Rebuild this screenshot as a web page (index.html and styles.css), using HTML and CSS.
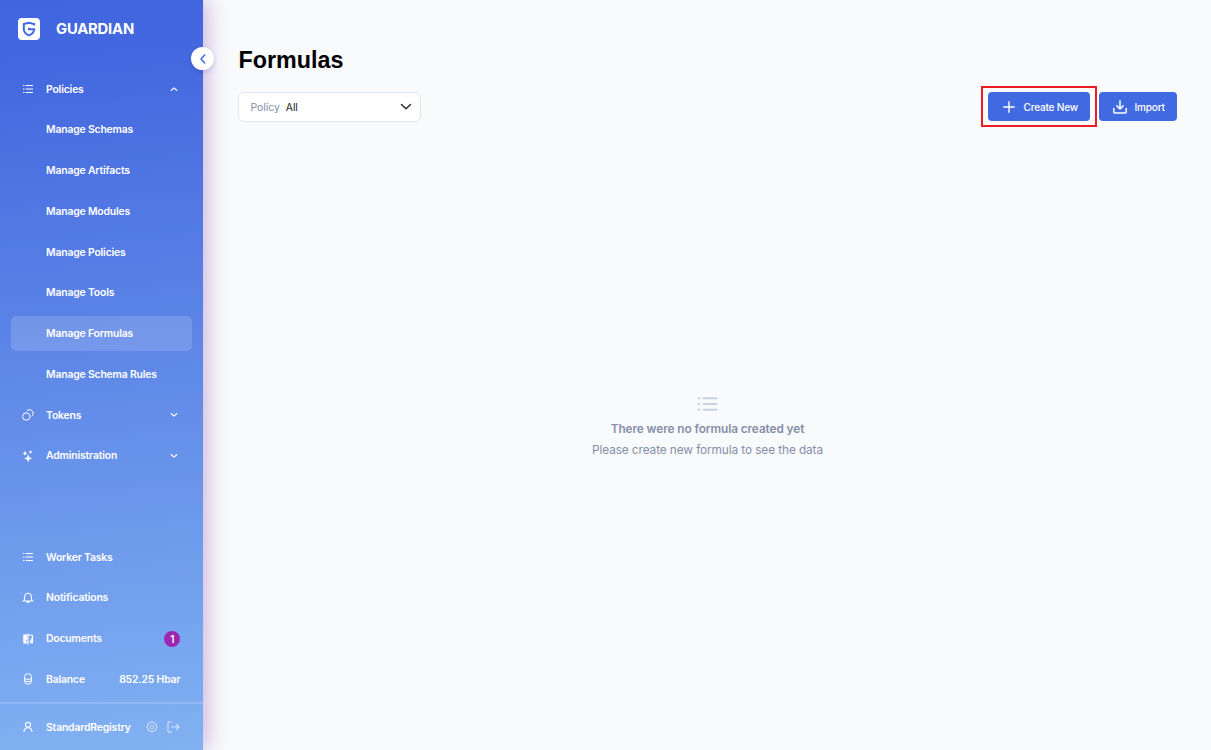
FILE: index.html
```html
<!DOCTYPE html>
<html lang="en">
<head>
<meta charset="utf-8">
<title>Guardian - Formulas</title>
<link rel="stylesheet" href="styles.css">
</head>
<body>
<svg class="defs" width="0" height="0" aria-hidden="true">
  <symbol id="list" viewBox="0 0 12 12"><path d="M1 2.500h1.500M1 6h1.500M1 9.500h1.500M3.800 2.500H11M3.800 6H11M3.800 9.500H11" fill="none" stroke="currentColor" stroke-width="1.100"/></symbol>
  <symbol id="down" viewBox="0 0 8 6"><path d="M1.200 1.500 4 4.200 6.800 1.500" fill="none" stroke="currentColor" stroke-width="1.100" stroke-linecap="round" stroke-linejoin="round"/></symbol>
</svg>
<div class="app">
  <aside class="sidebar">
    <header class="brand">
      <svg class="logo" viewBox="0 0 22 22"><rect width="22" height="22" rx="4" fill="#fff"/><path d="M16.200 7.600V6.100L11 4.700 5.800 6.100v5c0 3.300 2.300 5.200 5.200 6.300 2.800-1.100 5.100-3 5.200-6.100H11V9.700" fill="none" stroke="#4169e2" stroke-width="2"/></svg>
      <span class="brand-name">GUARDIAN</span>
    </header>
    <button class="collapse" aria-label="Collapse"><svg width="8" height="12" viewBox="0 0 8 12"><path d="M5.700 2 2 6l3.700 4" fill="none" stroke="#4169e2" stroke-width="1.500" stroke-linecap="round" stroke-linejoin="round"/></svg></button>
    <nav class="menu">
      <a class="item"><svg class="icon"><use href="#list"/></svg><span>Policies</span><svg class="chevron up"><use href="#down"/></svg></a>
      <a class="item sub">Manage Schemas</a>
      <a class="item sub">Manage Artifacts</a>
      <a class="item sub">Manage Modules</a>
      <a class="item sub">Manage Policies</a>
      <a class="item sub">Manage Tools</a>
      <a class="item sub active">Manage Formulas</a>
      <a class="item sub">Manage Schema Rules</a>
      <a class="item"><svg class="icon" viewBox="0 0 12 12"><g fill="none" stroke="currentColor"><circle cx="4.300" cy="7.500" r="3.700"/><path d="M4.600 2A3.700 3.700 0 1 1 9.700 7.300"/></g></svg><span>Tokens</span><svg class="chevron"><use href="#down"/></svg></a>
      <a class="item"><svg class="icon" viewBox="0 0 12 12"><path fill="currentColor" stroke="currentColor" stroke-width=".4" d="M6.200 4.700 7.200 7.400 9.700 8.400 7.200 9.300 6.200 11.700 5.200 9.300 2.700 8.400 5.200 7.400ZM3 1.200l.6 1.600 1.500.6-1.500.6L3 5.400l-.6-1.400L.9 3.400l1.500-.6ZM8.500.5l.5 1 1 .5-1 .4-.5 1-.5-1-1-.4 1-.5Z"/></svg><span>Administration</span><svg class="chevron"><use href="#down"/></svg></a>
    </nav>
    <nav class="menu bottom">
      <a class="item"><svg class="icon"><use href="#list"/></svg><span>Worker Tasks</span></a>
      <a class="item"><svg class="icon" viewBox="0 0 12 12"><path d="M1.500 9h9C9.300 8 9.400 7 9.400 5.200c0-2.400-1.300-4-3.400-4s-3.400 1.600-3.400 4C2.600 7 2.700 8 1.500 9ZM4.800 9.300c.2 1.400 2.200 1.400 2.400 0" fill="none" stroke="currentColor" stroke-width="1.100"/></svg><span>Notifications</span></a>
      <a class="item"><svg class="icon" viewBox="0 0 12 12"><path d="M2.200 1.500H5v9H2.200q-1 0-1-1v-7q0-1 1-1Z" fill="currentColor"/><path d="M6 .5v11M6.500 2h3q1 0 1 1v6q0 1-1 1h-1" fill="none" stroke="currentColor" stroke-width="1.200"/><path d="M3.400 8.500h1.400V6.200Z" fill="#729fec"/><path d="M9.800 4v5.500H7.500Z" fill="currentColor"/></svg><span>Documents</span><b class="badge">1</b></a>
      <a class="item"><svg class="icon" viewBox="0 0 12 12"><g fill="none" stroke="currentColor"><rect x="2.600" y=".8" width="6.800" height="10.400" rx="3"/><path d="M2.600 5.200c.7 1.600 6.100 1.600 6.800 0M2.600 7.500c.7 1.600 6.100 1.600 6.800 0"/></g></svg><span>Balance</span><span class="amount">852.25 Hbar</span></a>
    </nav>
    <footer class="user">
      <svg class="icon" viewBox="0 0 12 12"><g fill="none" stroke="currentColor" stroke-width="1.100"><circle cx="6" cy="3.700" r="2.500"/><path d="M2 11c0-2.600 1.500-4.300 4-4.300S10 8.400 10 11"/></g></svg>
      <span class="user-name">StandardRegistry</span>
      <svg class="gear" viewBox="0 0 12 12"><g fill="none" stroke="currentColor"><circle cx="6" cy="6" r="1.700"/><path d="m5.200.7h1.600l.5 1.300 1.500-.5 1.200 1.200-.6 1.300 1.700.8v1.700L9.600 7.300l.6 1.500L9 10l-1.500-.5-.7 1.600H5.200L4.600 9.500 3 10 1.900 8.900l.6-1.600L.8 6.600V5l1.700-.7-.6-1.500L3 1.600l1.600.5Z" stroke-linejoin="round"/></g></svg>
      <svg class="logout" viewBox="0 0 13 12"><path d="M5.300.8H2Q1 .8 1 1.800v8.400q0 1 1 1h3.300M4.200 6h7.700M9.200 3.200 12 6 9.200 8.800" fill="none" stroke="currentColor" stroke-width="1.100"/></svg>
    </footer>
  </aside>
  <main class="content">
    <h1 class="title">Formulas</h1>
    <div class="toolbar">
      <div class="select"><span class="label">Policy</span><span>All</span><svg class="caret" width="12" height="8" viewBox="0 0 12 8"><path d="M1.500 1.500 6 5.800l4.500-4.300" fill="none" stroke="#23252e" stroke-width="1.400" stroke-linecap="round" stroke-linejoin="round"/></svg></div>
      <div class="actions">
        <div class="highlight"><button class="btn create"><svg width="12" height="12" viewBox="0 0 12 12"><path d="M6 .7v10.600M.7 6h10.600" stroke="#fff" stroke-width="1.400" stroke-linecap="round"/></svg>Create New</button></div>
        <button class="btn import"><svg width="14" height="14" viewBox="0 0 14 14"><path d="M.8 8.500V12q0 1 1 1h10.400q1 0 1-1V8.500M7 .8v8M3.900 5.900 7 9l3.100-3.100" fill="none" stroke="#fff" stroke-width="1.500" stroke-linecap="round" stroke-linejoin="round"/></svg>Import</button>
      </div>
    </div>
    <section class="empty">
      <svg width="21" height="16" viewBox="0 0 21 16"><path d="M1.600 2.200h.8M1.600 8h.8M1.600 13.800h.8M6.500 2.200h13M6.500 8h13M6.500 13.800h13" fill="none" stroke="#c8d2e4" stroke-width="2.100" stroke-linecap="round"/></svg>
      <p class="empty-title">There were no formula created yet</p>
      <p class="empty-text">Please create new formula to see the data</p>
    </section>
  </main>
</div>
</body>
</html>
```

FILE: styles.css
```css
* { box-sizing: border-box; }
body { margin: 0; font-family: Inter, "Liberation Sans", sans-serif; background: #f9fafc; }
button { font: inherit; border: 0; padding: 0; }
.defs { position: absolute; }
.app { display: flex; height: 750px; overflow: hidden; }
.sidebar {
  position: relative; flex: none; width: 203.3px; height: 750px;
  display: flex; flex-direction: column;
  color: #fff; font-size: 10.4px; font-weight: 600; line-height: 12px; letter-spacing: -.17px;
  background: linear-gradient(175deg, #4165df 0%, #4368df 9%, #82b1f2 100%);
  box-shadow: 3px 0 20px rgba(103, 30, 150, .34);
}
.brand { display: flex; align-items: center; gap: 16.5px; height: 71.6px; padding: 0 0 13.5px 17.5px; }
.logo { width: 22px; height: 22px; }
.brand-name { font-size: 14.8px; font-weight: 700; line-height: 18px; letter-spacing: -.2px; }
.collapse {
  position: absolute; left: 191px; top: 47px; width: 23px; height: 23px;
  display: flex; align-items: center; justify-content: center;
  border-radius: 50%; background: #fff; box-shadow: 0 2px 5px rgba(40, 30, 130, .2);
}
.menu { display: flex; flex-direction: column; gap: 6px; padding: 0 11px; }
.bottom { margin-top: auto; }
.item { display: flex; align-items: center; height: 34.78px; padding: 1.2px 12px 0 11px; border-radius: 5px; }
.icon { flex: none; width: 12px; height: 12px; margin-right: 12px; }
.item .icon, .item .chevron { margin-bottom: 1.2px; }
.sub { padding-left: 35px; }
.active { background: rgba(255, 255, 255, .15); }
.chevron { width: 8px; height: 6px; margin-left: auto; margin-right: 2px; }
.up { transform: rotate(180deg); }
.badge {
  display: flex; align-items: center; justify-content: center;
  width: 16px; height: 16px; margin-left: auto; margin-bottom: 1.2px; border-radius: 50%;
  background: #9c27b0; font-size: 10px; font-weight: 600; letter-spacing: 0;
}
.amount { margin-left: auto; }
.user { display: flex; align-items: center; height: 48px; margin-top: 5.3px; padding-left: 22px; border-top: 2px solid rgba(255, 255, 255, .16); }
.user-name { width: 85px; padding-top: 1px; white-space: nowrap; }
.gear { width: 12px; height: 12px; margin-left: 15px; opacity: .65; }
.logout { width: 13px; height: 12px; margin-left: 9px; opacity: .65; }
.content { flex: 1; display: flex; flex-direction: column; padding: 46px 34px 0 34.7px; }
.title { margin: 0; font: 700 23.3px/28px "Liberation Sans", Arial, sans-serif; color: #000; padding-left: .5px; }
.toolbar { display: flex; align-items: center; justify-content: space-between; height: 41px; margin-top: 12px; }
.select {
  display: flex; align-items: center; gap: 6px; width: 182.7px; height: 30px; padding: 1px 8px 0 11.5px;
  border: 1px solid #e1e7ef; border-radius: 6px; background: #fff; color: #23252e; font-size: 10.5px; letter-spacing: -.08px;
}
.label { color: #848fa9; }
.caret { margin-left: auto; }
.actions { display: flex; align-items: center; gap: 2px; }
.highlight { display: flex; align-items: center; justify-content: center; width: 116px; height: 41px; border: 2px solid #ed1c24; }
.btn { display: flex; align-items: center; height: 29px; padding-top: 1px; border-radius: 4px; background: #4169e2; color: #fff; font-size: 10.1px; font-weight: 500; letter-spacing: -.22px; }
.create { width: 102px; padding-left: 15px; gap: 8.5px; }
.import { width: 78px; padding-left: 14px; gap: 7.5px; }
.empty { display: flex; flex-direction: column; align-items: center; margin-top: 269px; color: #848fa9; font-size: 11.8px; line-height: 20px; letter-spacing: -.08px; }
.empty p { margin: 0; }
.empty .empty-title { margin-top: 7px; font-weight: 600; }
.empty .empty-text { margin-top: 1px; }
```
